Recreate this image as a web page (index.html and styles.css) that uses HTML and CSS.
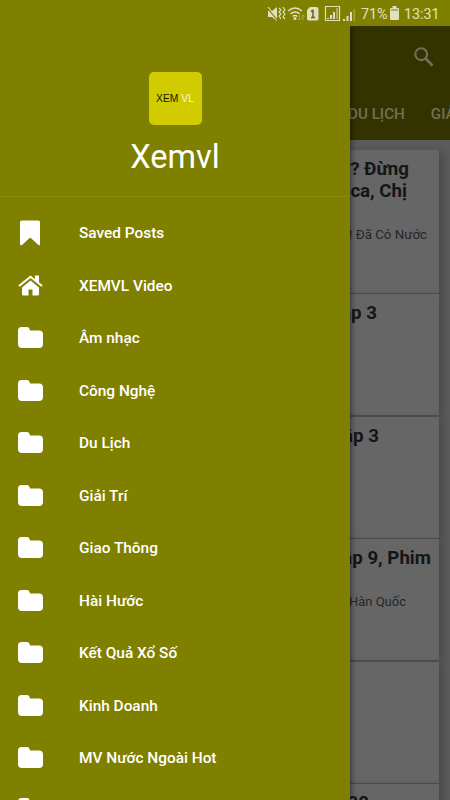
FILE: index.html
```html
<!DOCTYPE html>
<html lang="vi">
<head>
<meta charset="utf-8">
<title>Xemvl</title>
<link rel="stylesheet" href="styles.css">
</head>
<body>
<svg width="0" height="0" class="defs">
  <symbol id="folder" viewBox="0 0 25 21"><path d="M3.500 0H9q2.500 0 3 3.500h9q4 0 4 4V17q0 4-4 4H4q-4 0-4-4V3.500Q0 0 3.500 0z"/></symbol>
</svg>
<div class="screen">
  <header class="status">
    <svg class="s-icons" width="98" height="18" viewBox="0 0 98 18">
      <path d="M1 6h4l5-4v14l-5-4H1z"/>
      <path d="M0 2.500l10 12" stroke="#808000" stroke-width="1.200"/>
      <path d="M1 2l9 11M12 3l2 2-2 2 2 2-2 2 2 3M16 2l2 3-2 2 2 2-2 3 2 2" fill="none" stroke="#e0e0bf" stroke-width="1.100"/>
      <g fill="none" stroke="#e0e0bf" stroke-width="1.400"><path d="M21 6q7-6 14 0M23.300 9q5-4 9.500 0M25.500 11.500q2.500-2 5 0"/></g>
      <circle cx="28" cy="13.500" r="1.500"/>
      <path d="M32.500 10v5m-1.500-1.500l1.500 1.500 1.500-1.500M36 15v-5m-1.500 1.500L36 10l1.500 1.500" fill="none" stroke="#a8a850"/>
      <path d="M43 2h6.500q2 0 2 2v10q0 1.500-2 1.500h-8q-1.500 0-1.500-2V5z"/>
      <path d="M44 6.500l2-1v7M44 12.500h4" fill="none" stroke="#606000" stroke-width="1.400"/>
      <path d="M58.500 1.500h14v14h-14z" fill="none" stroke="#e0e0bf" stroke-width="1.200"/>
      <path d="M60 13h2v1h-2zM63 10h2v4h-2zM66 7h2v7h-2z"/><path d="M69 3h2v11h-2z" opacity=".45"/>
      <path d="M76 14h2v2h-2zM79.500 11h2v5h-2zM83 7h2v9h-2z"/><path d="M86.500 4h1.500v12h-1.500z" opacity=".35"/>
    </svg>
    <span class="pct">71%</span>
    <svg class="battery" width="9" height="14" viewBox="0 0 9 14"><path d="M2.500 0h4v2H8q1 0 1 1v10q0 1-1 1H1q-1 0-1-1V3q0-1 1-1h1.500z"/><path d="M1 3h7v2H1z" fill="#b0b060"/></svg>
    <span class="clock">13:31</span>
  </header>
  <main class="feed">
    <div class="appbar">
      <svg class="search" width="20" height="20" viewBox="0 0 20 20"><circle cx="7.200" cy="7.200" r="5.900" fill="none" stroke="#707059" stroke-width="2.100"/><path d="M11.500 11.500l7 7" stroke="#707059" stroke-width="2.600"/></svg>
    </div>
    <nav class="tabs"><span>DU LỊCH</span><span>GIẢI TRÍ</span></nav>
    <div class="cards">
      <article class="card first"><h2 class="end-30">.? Đừng<br><span class="nudge">ca, Chị</span></h2><p class="lead">! Đã Có Nước</p></article>
      <article class="card"><h2 class="end-62">Tập 3</h2></article>
      <article class="card"><h2 class="end-60">Tập 3</h2></article>
      <article class="card"><h2 class="end-8">Tập 9, Phim</h2><p class="end-33">Hàn Quốc</p></article>
      <article class="card"></article>
      <article class="card"><h2 class="end-70">30</h2></article>
    </div>
  </main>
  <aside class="drawer">
    <div class="profile">
      <div class="logo"><span>XEM</span> <b>VL</b></div>
      <h1>Xemvl</h1>
    </div>
    <ul class="menu">
      <li><svg width="25" height="26" viewBox="0 0 25 26"><path d="M3.500.5h17q1.500 0 1.500 1.500v22q0 2-1.500 1L12.200 17.500 4 25q-2 1-2-1V2Q2 .5 3.500.5z"/></svg>Saved Posts</li>
      <li><svg width="25" height="21" viewBox="0 0 25 21"><path d="M12.500 5.500L21 12.500v6.500q0 1.500-1.500 1.500H14.500v-6h-4v6H5.500Q4 20.500 4 19v-6.500z"/><path d="M1 11L12.500 1.700 24 11" fill="none" stroke="#fff" stroke-width="2"/><path d="M17 .5h4v8l-4-3.500z"/></svg>XEMVL Video</li>
      <li><svg width="25" height="21"><use href="#folder"/></svg>Âm nhạc</li>
      <li><svg width="25" height="21"><use href="#folder"/></svg>Công Nghệ</li>
      <li><svg width="25" height="21"><use href="#folder"/></svg>Du Lịch</li>
      <li><svg width="25" height="21"><use href="#folder"/></svg>Giải Trí</li>
      <li><svg width="25" height="21"><use href="#folder"/></svg>Giao Thông</li>
      <li><svg width="25" height="21"><use href="#folder"/></svg>Hài Hước</li>
      <li><svg width="25" height="21"><use href="#folder"/></svg>Kết Quả Xổ Số</li>
      <li><svg width="25" height="21"><use href="#folder"/></svg>Kinh Doanh</li>
      <li><svg width="25" height="21"><use href="#folder"/></svg>MV Nước Ngoài Hot</li>
      <li class="peek"><svg width="25" height="21"><use href="#folder"/></svg></li>
    </ul>
  </aside>
</div>
</body>
</html>
```
FILE: styles.css
```css
* { box-sizing: border-box; }
body { margin: 0; font-family: Roboto, sans-serif; }
h1, h2, p, ul { margin: 0; padding: 0; }
.defs { position: absolute; }
.screen { position: relative; width: 450px; height: 800px; overflow: hidden; background: #5b5b5b; display: flex; flex-direction: column; }
.status { height: 26px; flex: none; background: #808000; color: #e0e0bf; fill: #e0e0bf; display: flex; align-items: center; padding-left: 267px; font-size: 14.3px; line-height: 26px; white-space: nowrap; }
.s-icons { flex: none; margin-right: -4px; margin-top: 1px; }
.pct { width: 29px; padding-top: 2px; }
.battery { flex: none; }
.clock { margin-left: 5px; padding-top: 2px; }
.feed { flex: 1; min-height: 0; }
.appbar { height: 62px; background: #333300; display: flex; align-items: center; justify-content: flex-end; padding-right: 16px; }
.tabs { height: 52px; background: #333300; display: flex; gap: 26px; padding-left: 348px; line-height: 53px; font-size: 15.2px; font-weight: 500; color: #707059; white-space: nowrap; overflow: hidden; }
.cards { padding: 10px 11px 0 12px; display: flex; flex-direction: column; gap: 1.5px; }
.card { height: 121px; flex: none; background: #666; box-shadow: 4px 2px 8px rgba(0,0,0,.2); padding-top: 8px; text-align: right; color: #151515; white-space: nowrap; }
.first { height: 142.5px; }
.card h2 { font-size: 18.7px; line-height: 22px; font-weight: 700; }
.card p { font-size: 13px; line-height: 18px; margin-top: 24px; color: #262626; }
.nudge { margin-right: 2px; }
.card .lead { font-size: 13.3px; padding-right: 12px; }
.end-30 { padding-right: 30px; }
.end-62 { padding-right: 62px; }
.end-60 { padding-right: 60px; }
.end-8 { padding-right: 8px; }
.end-33 { padding-right: 33px; }
.end-70 { padding-right: 70px; }
.drawer { position: absolute; left: 0; top: 26px; width: 350px; height: 774px; background: #808000; color: #fff; box-shadow: 1px 0 6px rgba(0,0,0,.55); clip-path: inset(0 -12px 0 0); }
.profile { height: 171px; border-bottom: 1px solid #8b8b18; display: flex; flex-direction: column; align-items: center; padding-top: 46px; }
.logo { width: 53px; height: 53px; border-radius: 5px; background: #d0cc00; font: 10.3px/53px "Liberation Sans", sans-serif; text-align: center; color: #151500; white-space: nowrap; }
.logo b { color: #f6f6dd; font-weight: 400; }
.profile h1 { font-size: 32.5px; font-weight: 400; line-height: 40px; margin-top: 12px; }
.menu { list-style: none; padding-top: 10px; }
.menu li { height: 52.5px; display: flex; align-items: center; gap: 36px; padding-left: 18px; font-size: 15.4px; font-weight: 500; }
.menu .peek { align-items: flex-start; padding-top: 14.5px; }
.menu svg { fill: #fff; flex: none; margin-top: -1px; }
```
